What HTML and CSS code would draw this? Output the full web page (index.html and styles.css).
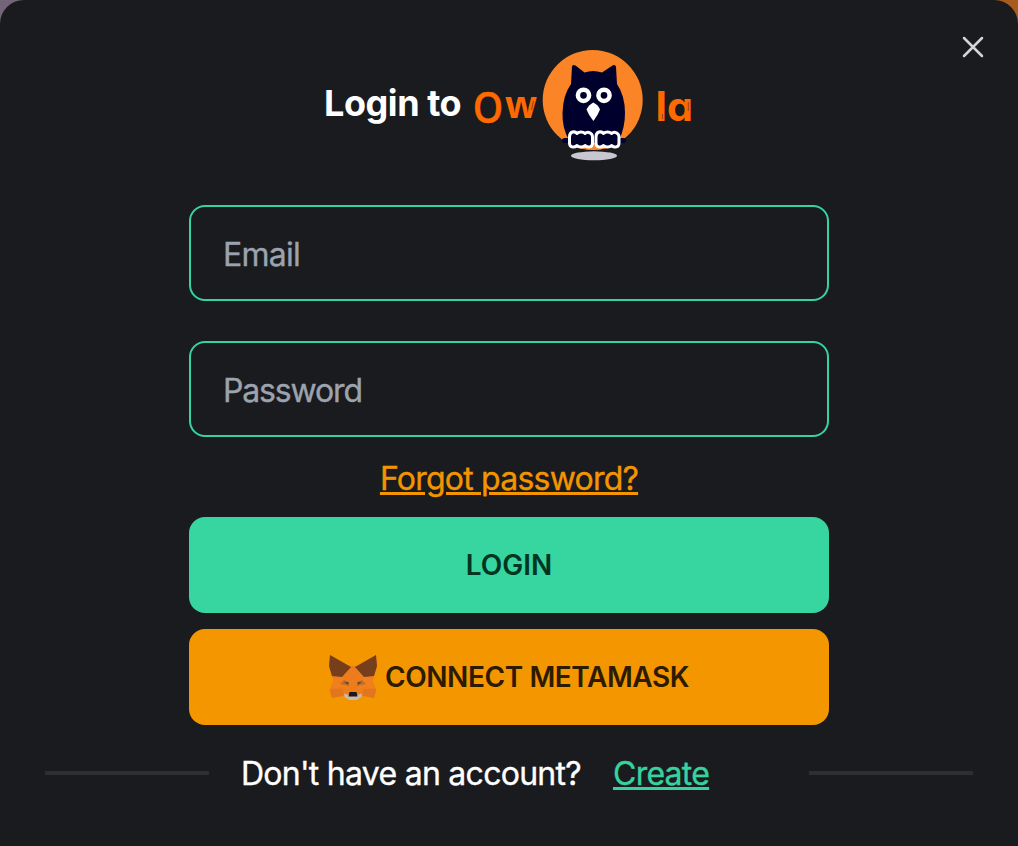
FILE: index.html
```html
<!DOCTYPE html>
<html lang="en">
<head>
<meta charset="utf-8">
<title>Login to Owla</title>
<link rel="stylesheet" href="styles.css">
</head>
<body>
<main class="modal">
  <button class="close" type="button" aria-label="Close">
    <svg width="22" height="22" viewBox="0 0 22 22"><path d="M2 2 20 20M20 2 2 20"/></svg>
  </button>
  <header class="heading">
    <h1 class="title">Login to</h1>
    <svg class="logo" width="220" height="114" viewBox="473 48 220 114">
      <text class="word round" transform="translate(472.7 123) scale(.89 1)" font-size="43.500">O</text>
      <text class="word" x="505" y="117.500" font-size="37" textLength="32" lengthAdjust="spacingAndGlyphs">w</text>
      <text class="word heavy" x="656" y="121" font-size="38" textLength="10.500" lengthAdjust="spacingAndGlyphs">l</text>
      <text class="word single" x="667" y="120.500" font-size="40" textLength="26" lengthAdjust="spacingAndGlyphs">a</text>
      <path class="nick" d="M533.500 101 531.500 110M662.500 114V119M688.300 102V111"/>
      <circle cx="592.700" cy="100" r="50" fill="#fb8427"/>
      <ellipse cx="594" cy="155.800" rx="23" ry="4.500" fill="#c8c6cf"/>
      <rect x="562" y="138" width="64" height="5" rx="2.500" fill="#00002d"/>
      <path d="M572 66.500Q572.500 64 575.500 65.500L584.500 72.500Q593 69.500 602 72.500L612.500 65.500Q615.500 64 616 67L617 84Q625 96 625 113Q625 128 619 140H569Q562 128 562.500 113Q563 95 571 84Z" fill="#00002d"/>
      <path d="M581 148Q593 152 607 148V145H581Z" fill="#fb8427"/>
      <circle cx="583.500" cy="95.300" r="5.600" class="eye"/>
      <circle cx="604" cy="95.300" r="5.600" class="eye"/>
      <path d="M593.300 102.500Q598.500 105 600 109.500Q598 115 593.400 121Q588.500 115 586.500 109.500Q588.500 105 593.300 102.500Z" fill="#fff"/>
      <path id="foot" class="foot" d="M569.500 137C569.500 131 575 131 577 133.500C579 131.500 583 131.500 585 133.500C588 131 592.500 133 592.500 137V143C592.500 147.500 588 148 585 145.500C583 147.500 579 147.500 577 145.500C574 148 569.500 147.500 569.500 143Z"/>
      <use href="#foot" x="26.500"/>
    </svg>
  </header>
  <form class="form">
    <input class="field email" type="email" placeholder="Email" aria-label="Email">
    <input class="field password" type="password" placeholder="Password" aria-label="Password">
    <a class="forgot" href="#">Forgot password?</a>
    <button class="button login" type="button">LOGIN</button>
    <button class="button metamask" type="button">
      <svg class="fox" width="48" height="46" viewBox="0 0 48 46">
        <path d="M1 1 20 12H28L47 1 48 12 45 23 43 27 47.500 36 45 44 33 42 29 46H19L15 42 3 44 .5 36 5 27 3 23 0 12Z" fill="#ed7c1c"/>
        <path d="M1 1 22 13 13 23 3 22 0 12ZM47 1 26 13 35 23 45 22 48 12Z" fill="#763e1a"/>
        <path d="M5 24 13 23 20 36 13 33 1 35ZM43 24 35 23 28 36 35 33 47 35Z" fill="#f0801e"/>
        <path d="M1 35H13L15 41 3 44ZM47 35H35L33 41 45 44Z" fill="#e0761d"/>
        <path d="M11 30 15 26 20 28V32ZM37 30 33 26 28 28V32Z" fill="#c76c1d"/>
        <path d="M15 28 19.500 28.500 19 30.500ZM33 28 28.500 28.500 29 30.500Z" fill="#34424a"/>
        <path d="M15 39.500 20 41H28L33 39.500 32.500 43 28 46H20L15.500 43Z" fill="#c9bbab"/>
        <path d="M20.500 38H27.500L28.500 42.500H19.500Z" fill="#17191b"/>
      </svg>
      <span class="connect-text">CONNECT METAMASK</span>
    </button>
  </form>
  <footer class="signup">
    <span class="rule"></span>
    <div class="prompt"><span class="question">Don't have an account?</span><a class="create" href="#">Create</a></div>
    <span class="rule"></span>
  </footer>
</main>
</body>
</html>
```
FILE: styles.css
```css
* { box-sizing: border-box; }
body {
  margin: 0;
  background: linear-gradient(90deg, #736577 50%, #a65b1f 50%);
  font-family: Inter, "Liberation Sans", sans-serif;
}
.modal {
  position: relative;
  height: 846px;
  padding: 48px 45px 0;
  overflow: hidden;
  background: #1a1b1e;
  border-radius: 24px 24px 0 0;
}
.close {
  position: absolute;
  top: 36px;
  right: 34px;
  width: 22px;
  height: 22px;
  padding: 0;
  border: 0;
  background: none;
}
.close svg { display: block; fill: none; stroke: #d4d3d9; stroke-width: 2.5; stroke-linecap: round; }
.heading { display: flex; align-items: center; height: 114px; padding-left: 279px; }
.title {
  width: 149px;
  margin: 0;
  padding-bottom: 4px;
  color: #fff;
  font-size: 36px;
  line-height: 40px;
  font-weight: 700;
  letter-spacing: -.45px;
  white-space: nowrap;
}
.logo { display: block; flex: none; }
.word { font-family: "Open Sans", sans-serif; font-weight: 700; fill: #ff6900; }
.round { stroke: #ff6900; stroke-width: .4; font-weight: 600; }
.heavy { font-weight: 800; }
.single { font-family: Inter, sans-serif; font-feature-settings: "cv11"; font-weight: 700; }
.nick { fill: none; stroke: #7a3812; stroke-width: .8; }
.eye { fill: #00002d; stroke: #fff; stroke-width: 4.5; }
.foot { fill: #00002d; stroke: #fff; stroke-width: 3; stroke-linejoin: round; }
.form { display: flex; flex-direction: column; width: 640px; margin: 43px auto 0; }
.field {
  height: 96px;
  margin-bottom: 40px;
  padding: 2px 32px 0;
  border: 2px solid #37d39f;
  border-radius: 16px;
  background: transparent;
  color: #fff;
  font: 400 32px Inter, sans-serif;
  -webkit-text-stroke-width: .35px;
}
.email { letter-spacing: -.75px; }
.password { margin-bottom: 17px; letter-spacing: -1.15px; }
.field::placeholder { color: #9ca3af; opacity: 1; }
.forgot {
  align-self: center;
  height: 48px;
  margin-bottom: 15px;
  padding-top: 1px;
  color: #f39500;
  font-size: 32px;
  line-height: 48px;
  letter-spacing: -.77px;
  text-underline-offset: 2px;
  text-decoration-thickness: 3px;
  -webkit-text-stroke-width: .35px;
}
.button {
  display: flex;
  align-items: center;
  justify-content: center;
  height: 96px;
  padding: 0;
  border: 0;
  border-radius: 16px;
  font: 600 28px Inter, sans-serif;
}
.login { margin-bottom: 16px; background: #37d5a0; color: #003522; }
.metamask { gap: 8px; background: #f49600; color: #2d1b00; }
.connect-text { letter-spacing: -.42px; }
.signup { display: flex; align-items: center; gap: 32px; height: 48px; margin-top: 24px; }
.rule { width: 164px; height: 4px; background: #2e2f32; }
.prompt { display: flex; flex: 1; gap: 32px; padding-top: 2px; font-size: 32px; line-height: 48px; white-space: nowrap; -webkit-text-stroke-width: .35px; }
.question { width: 340px; color: #fff; letter-spacing: -.73px; }
.create { color: #37d39f; letter-spacing: -.75px; text-underline-offset: 2px; text-decoration-thickness: 3px; }
```
